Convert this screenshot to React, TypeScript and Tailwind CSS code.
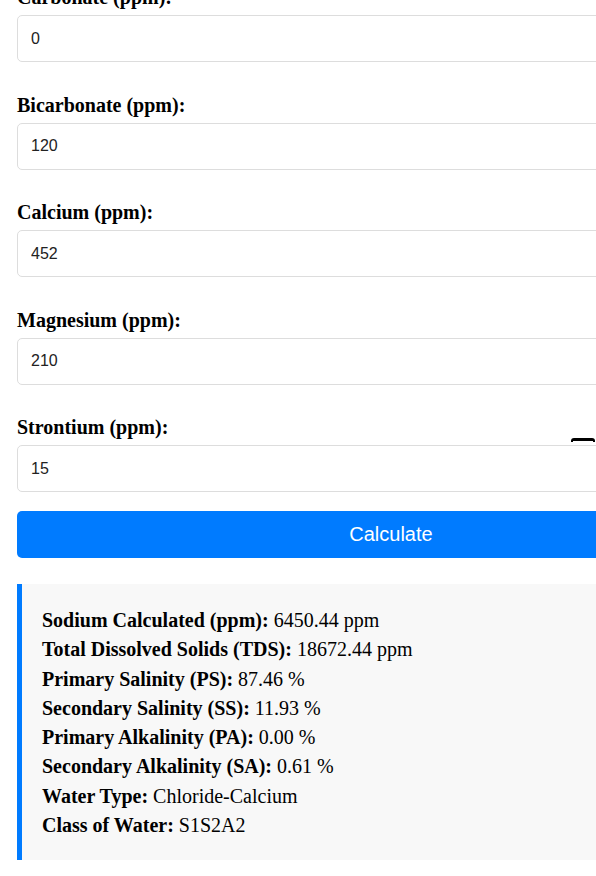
import React from "react";

const fields = [
  { label: "Carbonate (ppm):", value: "0" },
  { label: "Bicarbonate (ppm):", value: "120" },
  { label: "Calcium (ppm):", value: "452" },
  { label: "Magnesium (ppm):", value: "210" },
  { label: "Strontium (ppm):", value: "15" },
];

const results = [
  { label: "Sodium Calculated (ppm):", value: "6450.44 ppm" },
  { label: "Total Dissolved Solids (TDS):", value: "18672.44 ppm" },
  { label: "Primary Salinity (PS):", value: "87.46 %" },
  { label: "Secondary Salinity (SS):", value: "11.93 %" },
  { label: "Primary Alkalinity (PA):", value: "0.00 %" },
  { label: "Secondary Alkalinity (SA):", value: "0.61 %" },
  { label: "Water Type:", value: "Chloride-Calcium" },
  { label: "Class of Water:", value: "S1S2A2" },
];

export default function App() {
  return (
    <div className="w-full h-[876px] overflow-hidden bg-white font-['Liberation_Serif',serif] text-black">
      <div className="ml-[17px] w-[748px] -mt-[14px]">
        {/* Input fields */}
        {fields.map((f, i) => (
          <div key={f.label} className={i === 0 ? "" : "mt-[31.5px]"}>
            <label className="block text-[20px] font-bold leading-[23px] mb-[6px]">
              {f.label}
            </label>
            <div className="relative">
              {i === 4 && (
                <div className="absolute right-[170px] -top-[7px] w-[24px] h-[4px] border-t-[3px] border-x-[2px] border-black rounded-t-[3px]" />
              )}
              <input
                readOnly
                value={f.value}
                className="relative block w-full h-[47px] bg-white border border-[#dddddd] rounded-[5px] pl-[13px] font-['Liberation_Sans',sans-serif] text-[16px] text-[#222] outline-none"
              />
            </div>
          </div>
        ))}

        {/* Calculate button */}
        <button className="mt-[19px] block w-full h-[47px] rounded-[5px] bg-[#007bff] text-white font-['Liberation_Sans',sans-serif] text-[20px] leading-[45px]">
          Calculate
        </button>

        {/* Results */}
        <div className="mt-[26px] border-l-[5px] border-[#007bff] bg-[#f8f8f8] pt-[22px] pb-[20px] pl-[20px] text-[20px] leading-[29.3px]">
          {results.map((r) => (
            <div key={r.label}>
              <strong>{r.label}</strong> {r.value}
            </div>
          ))}
        </div>
      </div>
    </div>
  );
}
